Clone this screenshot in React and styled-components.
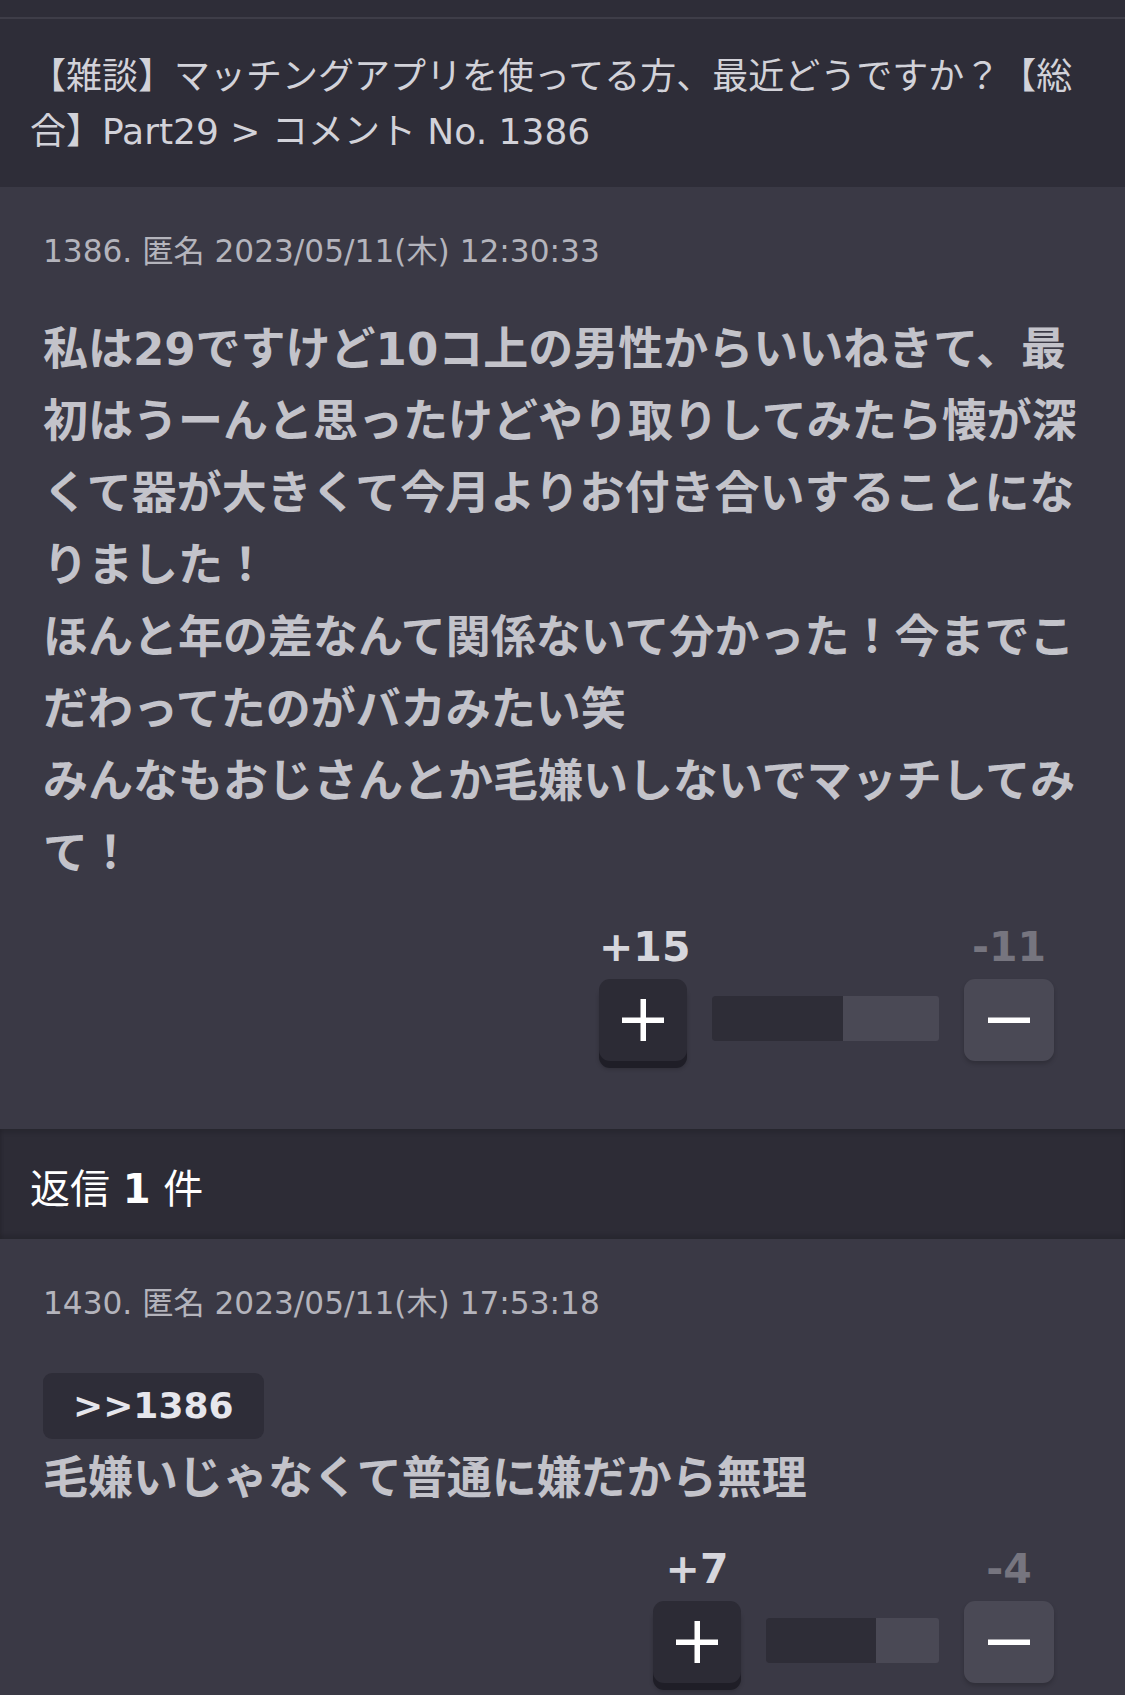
import styled, { createGlobalStyle } from "styled-components";

const GlobalStyle = createGlobalStyle`
  html, body {
    margin: 0;
    padding: 0;
    background: #2e2d38;
  }
  body {
    font-family: "DejaVu Sans", "Noto Sans CJK JP", sans-serif;
  }
`;

const Page = styled.div`
  width: 1125px;
  min-height: 1695px;
  background: #3a3945;
  overflow: hidden;
`;

const TopStrip = styled.div`
  height: 17px;
  background: #2e2d38;
  border-bottom: 2px solid #3e3d48;
`;

const Header = styled.h1`
  margin: 0;
  padding: 30px 30px 28px;
  background: #2e2d38;
  color: #d2d2d9;
  font-size: 36px;
  font-weight: 400;
  line-height: 55px;
`;

const Comment = styled.section`
  padding: 44px 43px 68px;
  background: #3a3945;
`;

const Meta = styled.div`
  color: #b4b4bc;
  font-size: 31.2px;
  line-height: 40px;
`;

const Body = styled.div`
  margin-top: 43px;
  color: #c3c3ca;
  font-size: 45px;
  font-weight: 700;
  line-height: 72px;
  white-space: pre-line;
`;

const Anchor = styled.div`
  display: inline-block;
  margin-top: 50px;
  padding: 0 30px;
  height: 66px;
  line-height: 66px;
  border-radius: 9px;
  background: #2e2d38;
  color: #e6e6ec;
  font-size: 36px;
  font-weight: 700;
`;

const AnchorBody = styled(Body)`
  margin-top: 4px;
`;

const VoteRow = styled.div`
  display: flex;
  justify-content: flex-end;
  margin-top: ${(p) => p.$gap}px;
  padding-right: 28px;
`;

const VoteGrid = styled.div`
  display: grid;
  grid-template-columns: 88px ${(p) => p.$barWidth}px 90px;
  grid-template-rows: 48px auto;
  column-gap: 25px;
  row-gap: 8px;
  align-items: center;
`;

const Count = styled.div`
  text-align: center;
  font-size: 41px;
  font-weight: 700;
  line-height: 48px;
  color: ${(p) => (p.$minus ? "#76757f" : "#d6d6dc")};
`;

const VoteButton = styled.button`
  display: flex;
  align-items: center;
  justify-content: center;
  width: 100%;
  height: 82px;
  padding: 0;
  border: none;
  border-radius: 11px;
  background: ${(p) => (p.$minus ? "#4a4955" : "#2c2b35")};
  box-shadow: ${(p) =>
    p.$minus
      ? "0 3px 4px rgba(0, 0, 0, 0.18)"
      : "0 7px 0 #1f1e27, 0 8px 4px rgba(0, 0, 0, 0.2)"};
  align-self: start;
`;

const Bar = styled.div`
  display: flex;
  height: 45px;
  margin-bottom: 4px;
  background: #4a4955;
  border-radius: 3px;
  overflow: hidden;
`;

const BarFill = styled.div`
  height: 100%;
  background: #2e2d37;
`;

const ReplyHeader = styled.div`
  padding: 10px 30px 0;
  height: 100px;
  line-height: 100px;
  background: #2d2c36;
  color: #ffffff;
  font-size: 40px;
  box-shadow: inset 0 4px 4px rgba(0, 0, 0, 0.12),
    inset 0 -4px 4px rgba(0, 0, 0, 0.12);
  b {
    font-weight: 700;
  }
`;

const PlusIcon = () => (
  <svg width="42" height="42" viewBox="0 0 42 42">
    <rect x="18.5" y="0" width="5.5" height="42" fill="#fff" />
    <rect x="0" y="18.5" width="42" height="5.5" fill="#fff" />
  </svg>
);

const MinusIcon = () => (
  <svg width="42" height="6" viewBox="0 0 42 6">
    <rect x="0" y="0.5" width="42" height="5.5" fill="#fff" />
  </svg>
);

const Vote = ({ plus, minus, barWidth, gap = 33 }) => {
  const ratio = plus / (plus + minus);
  return (
    <VoteRow $gap={gap}>
      <VoteGrid $barWidth={barWidth}>
        <Count>+{plus}</Count>
        <div />
        <Count $minus>-{minus}</Count>
        <VoteButton aria-label="plus">
          <PlusIcon />
        </VoteButton>
        <Bar>
          <BarFill style={{ width: `${ratio * 100}%` }} />
        </Bar>
        <VoteButton $minus aria-label="minus">
          <MinusIcon />
        </VoteButton>
      </VoteGrid>
    </VoteRow>
  );
};

const App = () => {
  return (
    <Page>
      <GlobalStyle />
      <TopStrip />
      <Header>
        【雑談】マッチングアプリを使ってる方、最近どうですか？【総合】Part29 &gt; コメント No. 1386
      </Header>

      <Comment>
        <Meta>1386. 匿名 2023/05/11(木) 12:30:33</Meta>
        <Body>
          {`私は29ですけど10コ上の男性からいいねきて、最初はうーんと思ったけどやり取りしてみたら懐が深くて器が大きくて今月よりお付き合いすることになりました！
ほんと年の差なんて関係ないて分かった！今までこだわってたのがバカみたい笑
みんなもおじさんとか毛嫌いしないでマッチしてみて！`}
        </Body>
        <Vote plus={15} minus={11} barWidth={227} />
      </Comment>

      <ReplyHeader>
        返信 <b>1</b> 件
      </ReplyHeader>

      <Comment>
        <Meta>1430. 匿名 2023/05/11(木) 17:53:18</Meta>
        <Anchor>&gt;&gt;1386</Anchor>
        <AnchorBody>毛嫌いじゃなくて普通に嫌だから無理</AnchorBody>
        <Vote plus={7} minus={4} barWidth={173} gap={30} />
      </Comment>
    </Page>
  );
};

export default App;
